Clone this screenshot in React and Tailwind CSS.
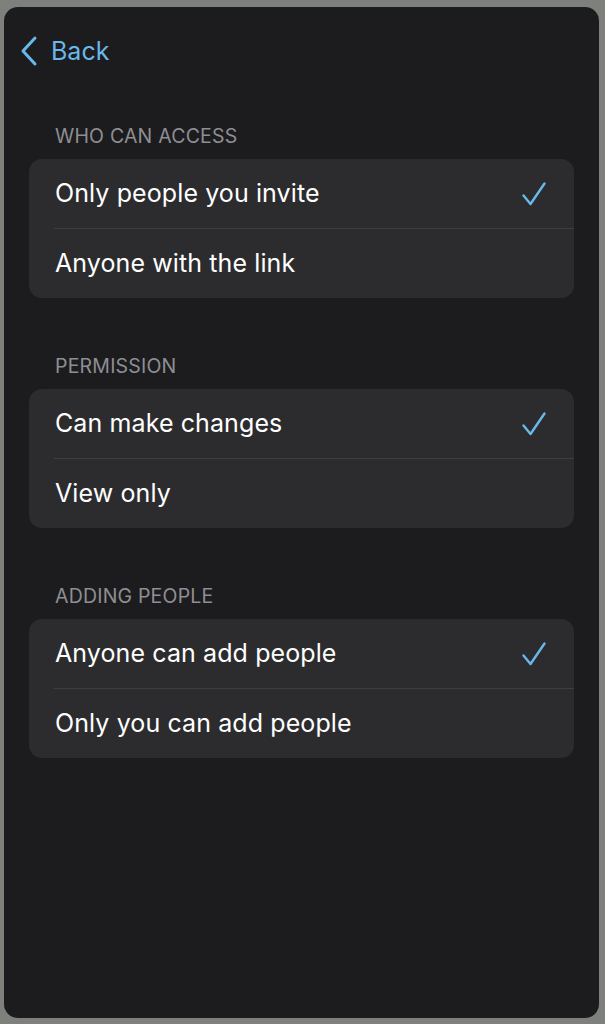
import React, { useState } from "react";

const sections = [
  {
    title: "WHO CAN ACCESS",
    options: ["Only people you invite", "Anyone with the link"],
  },
  {
    title: "PERMISSION",
    options: ["Can make changes", "View only"],
  },
  {
    title: "ADDING PEOPLE",
    options: ["Anyone can add people", "Only you can add people"],
  },
];

const Check = () => (
  <svg width="26" height="26" viewBox="0 0 26 26" fill="none">
    <path
      d="M2.5 14.5 L9.5 23 L23.5 2.5"
      stroke="#6ab8ea"
      strokeWidth="2.4"
      strokeLinecap="round"
      strokeLinejoin="round"
    />
  </svg>
);

const Section = ({ title, options }) => {
  const [selected, setSelected] = useState(0);

  return (
    <div className="flex flex-col">
      <p className="h-[24px] pl-[51px] text-[19.5px] leading-[24px] tracking-[0.2px] text-[#8e8e93]">
        {title}
      </p>
      <div className="mx-[25px] mt-[11px] overflow-hidden rounded-[13px] bg-[#2c2c2e]">
        {options.map((option, i) => (
          <div key={option} className="flex flex-col">
            {i > 0 && <div className="ml-[25px] h-px bg-[#3d3d40]" />}
            <button
              onClick={() => setSelected(i)}
              className="flex h-[69px] w-full items-center justify-between pl-[26px] pr-[27px] text-left"
            >
              <span className="text-[25px] tracking-[0.1px] text-white">{option}</span>
              {selected === i && <Check />}
            </button>
          </div>
        ))}
      </div>
    </div>
  );
};

const App = () => {
  return (
    <div className="min-h-[1024px] bg-[#7e807b] px-[4px] pb-[6px] pt-[7px] font-['Inter',sans-serif]">
      <div className="flex h-[1011px] w-[595px] flex-col rounded-[14px] bg-[#1c1c1e]">
        <button className="ml-[14px] mt-[28px] flex items-center gap-[11px] text-[#6ab8ea]">
          <svg width="22" height="32" viewBox="0 0 22 32" fill="none">
            <path
              d="M17 3 L5 16 L17 29"
              stroke="#6ab8ea"
              strokeWidth="3"
              strokeLinecap="round"
              strokeLinejoin="round"
            />
          </svg>
          <span className="text-[25px] leading-[32px]">Back</span>
        </button>
        <div className="mt-[57px] flex flex-col gap-[56px]">
          {sections.map((s) => (
            <Section key={s.title} title={s.title} options={s.options} />
          ))}
        </div>
      </div>
    </div>
  );
};

export default App;
